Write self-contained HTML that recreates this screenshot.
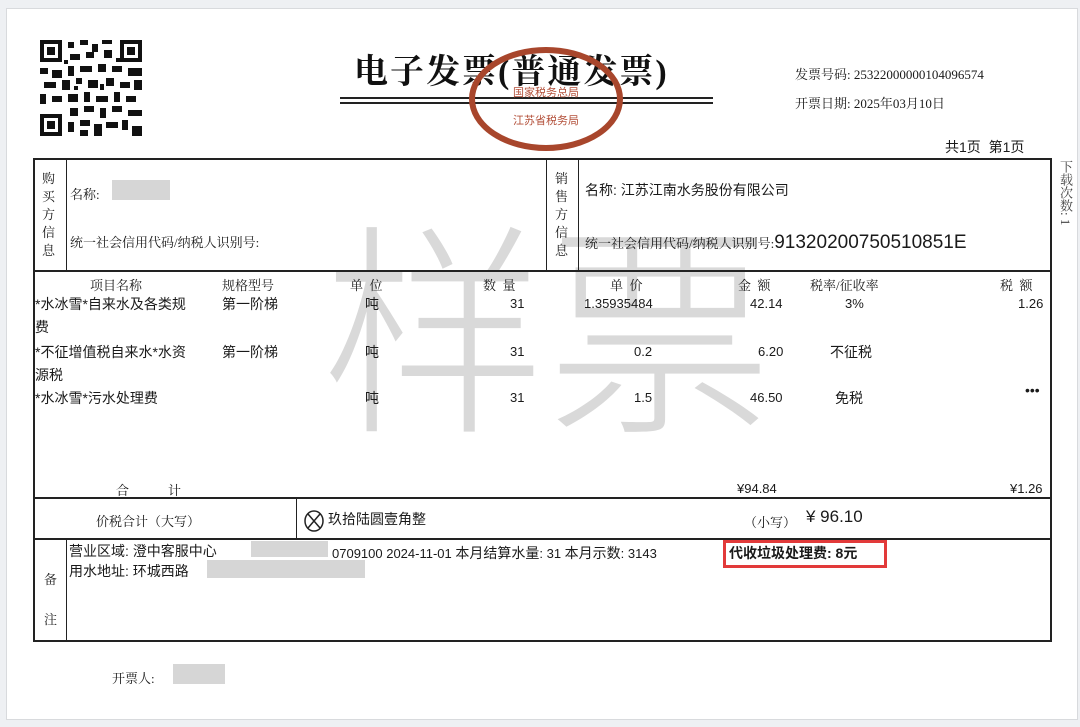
<!DOCTYPE html>
<html><head><meta charset="utf-8"><style>
body{margin:0;width:1080px;height:727px;background:#eef0f3;position:relative;overflow:hidden;font-family:"Liberation Sans","Noto Sans CJK SC",sans-serif;color:#1a1a1a}
.card{position:absolute;left:6px;top:8px;width:1070px;height:710px;background:#fff;border:1px solid #d8dadd}
.a{position:absolute;white-space:nowrap}
.s{font-family:"Liberation Serif","Noto Serif CJK SC",serif}
.l{position:absolute;background:#222}
.g{position:absolute;background:#d6d6d6}
.sm{font-size:13px}
.md{font-size:14px}
</style></head><body>
<div class="card"></div>
<svg class="a" style="left:40px;top:40px" width="102" height="96" viewBox="0 0 102 96">
<rect width="102" height="96" fill="#fff"/>
<g fill="#111">
<rect x="0" y="0" width="22" height="22"/><rect x="4" y="4" width="14" height="14" fill="#fff"/><rect x="7" y="7" width="8" height="8"/>
<rect x="80" y="0" width="22" height="22"/><rect x="84" y="4" width="14" height="14" fill="#fff"/><rect x="87" y="7" width="8" height="8"/>
<rect x="0" y="74" width="22" height="22"/><rect x="4" y="78" width="14" height="14" fill="#fff"/><rect x="7" y="81" width="8" height="8"/>
<path d="M28 2h6v6h-6zM40 0h8v5h-8zM52 4h6v8h-6zM62 0h10v4h-10zM30 14h10v6h-10zM46 12h8v6h-8zM64 10h8v8h-8zM0 28h8v6h-8zM12 30h10v8h-10zM28 26h6v10h-6zM40 26h12v6h-12zM58 24h8v8h-8zM72 26h10v6h-10zM88 28h14v8h-14zM4 42h12v6h-12zM22 40h8v10h-8zM36 38h6v6h-6zM48 40h10v8h-10zM66 38h8v8h-8zM80 42h10v6h-10zM94 40h8v10h-8zM0 54h6v10h-6zM12 56h10v6h-10zM28 54h10v8h-10zM44 52h6v10h-6zM56 56h12v6h-12zM74 52h6v10h-6zM86 56h10v6h-10zM30 68h8v8h-8zM44 66h10v6h-10zM60 68h6v10h-6zM72 66h10v6h-10zM88 70h14v6h-14zM28 82h6v10h-6zM40 80h10v6h-10zM54 84h8v12h-8zM66 82h12v6h-12zM82 80h6v10h-6zM92 86h10v10h-10zM40 90h8v6h-8zM24 20h4v4h-4zM34 46h4v4h-4zM60 44h4v6h-4zM76 18h4v4h-4z"/>
</g></svg>
<div class="a s" style="left:354px;top:44px;font-size:34px;letter-spacing:2px;color:#111;font-weight:bold">电子发票(普通发票)</div>
<div class="l" style="left:340px;top:97px;width:373px;height:2px"></div>
<div class="l" style="left:340px;top:102px;width:373px;height:2px"></div>
<svg class="a" style="left:466px;top:46px" width="160" height="106"><ellipse cx="80" cy="53" rx="74" ry="49" fill="none" stroke="#a8462c" stroke-width="6"/><text x="80" y="50" text-anchor="middle" font-size="11" fill="#b3503a" font-family="Noto Sans CJK SC">国家税务总局</text><text x="80" y="78" text-anchor="middle" font-size="11" fill="#b3503a" font-family="Noto Sans CJK SC">江苏省税务局</text></svg>
<div class="a sm s" style="left:795px;top:64px">发票号码: 25322000000104096574</div>
<div class="a sm s" style="left:795px;top:93px">开票日期: 2025年03月10日</div>
<div class="a md" style="left:945px;top:137px">共1页&nbsp;&nbsp;第1页</div>
<div class="a sm s" style="left:1056px;top:160px;writing-mode:vertical-rl;color:#444">下载次数: 1</div>
<div class="a" style="left:322px;top:205px;font-size:225px;color:#d9d9d9;font-family:'Noto Sans CJK SC';line-height:1;font-weight:300">样票</div>
<div class="l" style="left:33px;top:158px;width:1018px;height:2px"></div>
<div class="l" style="left:33px;top:270px;width:1018px;height:2px"></div>
<div class="l" style="left:33px;top:497px;width:1018px;height:2px"></div>
<div class="l" style="left:33px;top:538px;width:1018px;height:2px"></div>
<div class="l" style="left:33px;top:640px;width:1018px;height:2px"></div>
<div class="l" style="left:33px;top:158px;width:2px;height:484px"></div>
<div class="l" style="left:1050px;top:158px;width:2px;height:484px"></div>
<div class="l" style="left:66px;top:158px;width:1px;height:112px"></div>
<div class="l" style="left:546px;top:158px;width:1px;height:112px"></div>
<div class="l" style="left:578px;top:158px;width:1px;height:112px"></div>
<div class="l" style="left:296px;top:497px;width:1px;height:42px"></div>
<div class="l" style="left:66px;top:538px;width:1px;height:103px"></div>
<div class="a sm s" style="left:42px;top:170px;width:14px;white-space:normal;line-height:18px">购买方信息</div>
<div class="a sm s" style="left:70px;top:184px">名称:</div>
<div class="g" style="left:112px;top:180px;width:58px;height:20px"></div>
<div class="a sm s" style="left:70px;top:232px">统一社会信用代码/纳税人识别号:</div>
<div class="a sm s" style="left:555px;top:170px;width:14px;white-space:normal;line-height:18px">销售方信息</div>
<div class="a md" style="left:585px;top:180px">名称: 江苏江南水务股份有限公司</div>
<div class="a sm s" style="left:585px;top:232px">统一社会信用代码/纳税人识别号:<span style="font-size:19px;font-family:'Liberation Sans'">91320200750510851E</span></div>
<div class="a sm s" style="left:90px;top:275px">项目名称</div>
<div class="a sm s" style="left:222px;top:275px">规格型号</div>
<div class="a sm s" style="left:350px;top:275px">单&nbsp;&nbsp;位</div>
<div class="a sm s" style="left:483px;top:275px">数&nbsp;&nbsp;量</div>
<div class="a sm s" style="left:610px;top:275px">单&nbsp;&nbsp;价</div>
<div class="a sm s" style="left:738px;top:275px">金&nbsp;&nbsp;额</div>
<div class="a sm s" style="left:810px;top:275px">税率/征收率</div>
<div class="a sm s" style="left:1000px;top:275px">税&nbsp;&nbsp;额</div>
<div class="a md" style="left:35px;top:294px">*水冰雪*自来水及各类规</div>
<div class="a md" style="left:35px;top:317px">费</div>
<div class="a md" style="left:222px;top:294px">第一阶梯</div>
<div class="a md" style="left:365px;top:294px">吨</div>
<div class="a sm" style="left:510px;top:296px">31</div>
<div class="a sm" style="left:584px;top:296px">1.35935484</div>
<div class="a sm" style="left:750px;top:296px">42.14</div>
<div class="a sm" style="left:845px;top:296px">3%</div>
<div class="a sm" style="left:1018px;top:296px">1.26</div>
<div class="a md" style="left:35px;top:342px">*不征增值税自来水*水资</div>
<div class="a md" style="left:35px;top:365px">源税</div>
<div class="a md" style="left:222px;top:342px">第一阶梯</div>
<div class="a md" style="left:365px;top:342px">吨</div>
<div class="a sm" style="left:510px;top:344px">31</div>
<div class="a sm" style="left:634px;top:344px">0.2</div>
<div class="a sm" style="left:758px;top:344px">6.20</div>
<div class="a md" style="left:830px;top:342px">不征税</div>
<div class="a md" style="left:35px;top:388px">*水冰雪*污水处理费</div>
<div class="a md" style="left:365px;top:388px">吨</div>
<div class="a sm" style="left:510px;top:390px">31</div>
<div class="a sm" style="left:634px;top:390px">1.5</div>
<div class="a sm" style="left:750px;top:390px">46.50</div>
<div class="a md" style="left:835px;top:388px">免税</div>
<div class="a md" style="left:1025px;top:382px">•••</div>
<div class="a sm s" style="left:116px;top:480px">合&nbsp;&nbsp;&nbsp;&nbsp;&nbsp;&nbsp;&nbsp;&nbsp;&nbsp;&nbsp;&nbsp;&nbsp;计</div>
<div class="a sm" style="left:737px;top:481px">¥94.84</div>
<div class="a sm" style="left:1010px;top:481px">¥1.26</div>
<div class="a sm s" style="left:96px;top:511px">价税合计（大写）</div>
<svg class="a" style="left:304px;top:510px" width="20" height="22"><ellipse cx="10" cy="11" rx="9" ry="10" fill="none" stroke="#222" stroke-width="1.5"/><path d="M4 4L16 18M16 4L4 18" stroke="#222" stroke-width="1.5"/></svg>
<div class="a md" style="left:328px;top:509px">玖拾陆圆壹角整</div>
<div class="a sm s" style="left:744px;top:512px">（小写）</div>
<div class="a" style="left:806px;top:507px;font-size:17px">¥ 96.10</div>
<div class="a sm s" style="left:44px;top:560px;line-height:40px;width:14px;white-space:normal">备注</div>
<div class="a md" style="left:69px;top:541px">营业区域: 澄中客服中心</div>
<div class="g" style="left:251px;top:541px;width:77px;height:16px"></div>
<div class="a sm" style="left:332px;top:543px">0709100 2024-11-01 <span style="font-size:14px">本月结算水量</span>: 31 <span style="font-size:14px">本月示数</span>: 3143</div>
<div class="a md" style="left:69px;top:561px">用水地址: 环城西路</div>
<div class="g" style="left:207px;top:560px;width:158px;height:18px"></div>
<div class="a" style="left:723px;top:540px;width:164px;height:28px;border:3px solid #e23a3a;box-sizing:border-box"></div>
<div class="a md" style="left:729px;top:543px;font-weight:bold">代收垃圾处理费: 8元</div>
<div class="a sm s" style="left:112px;top:668px">开票人:</div>
<div class="g" style="left:173px;top:664px;width:52px;height:20px"></div>
</body></html>
